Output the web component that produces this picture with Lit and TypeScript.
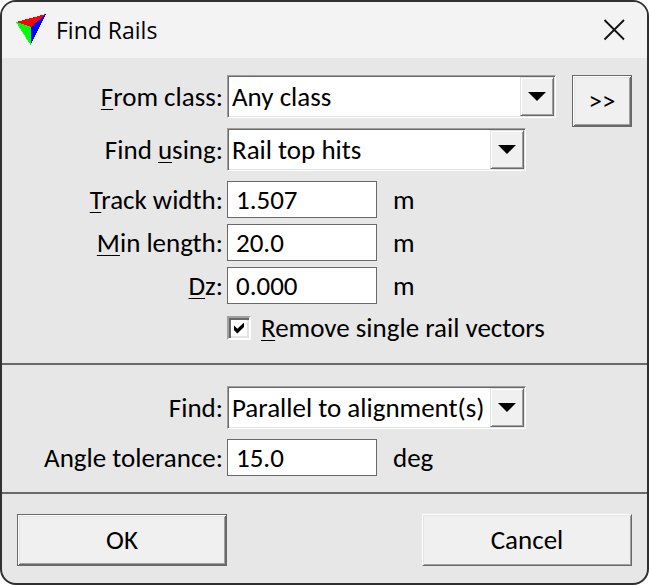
import { LitElement, html, css } from "lit";
import { customElement } from "lit/decorators.js";

const controlFont = css`
  font-family: Calibri, Carlito, Lato, "Liberation Sans", sans-serif;
  font-size: 27px;
  line-height: 34px;
  color: #000;
`;

@customElement("app-root")
class AppRoot extends LitElement {
  static styles = css`
    :host {
      display: block;
      ${controlFont}
    }
    .dialog {
      box-sizing: border-box;
      min-height: 100vh;
      border: 2px solid #303030;
      border-radius: 16px;
      background: #e7e7e7;
      overflow: hidden;
    }
    .titlebar {
      display: flex;
      align-items: center;
      height: 56px;
      padding: 0 20px 0 13px;
      background: #f3f3f3;
    }
    .logo {
      flex: none;
    }
    .title {
      flex: 1;
      margin: 0 0 0 9px;
      font: 400 23px/32px "Segoe UI", "Open Sans", "Noto Sans", sans-serif;
    }
    .close {
      display: flex;
      padding: 0;
      border: 0;
      background: none;
    }
    .section {
      display: flex;
      flex-direction: column;
      gap: 10px;
      padding: 21px 15px 16px 0;
      border-bottom: 2px solid #696969;
    }
    .main {
      padding: 17px 15px 23px 0;
    }
    .row {
      display: grid;
      grid-template-columns: 221px 1fr;
      column-gap: 4px;
      align-items: center;
    }
    .label {
      text-align: right;
      white-space: nowrap;
    }
    .field {
      display: flex;
      align-items: center;
      gap: 16px;
    }
    .inputs {
      display: flex;
      flex-direction: column;
      gap: 6px;
    }
    .key {
      text-decoration: underline;
      text-decoration-thickness: 1px;
      text-underline-offset: 3px;
    }
    .combo {
      position: relative;
      width: 299px;
    }
    .wide {
      flex: 1;
    }
    .select {
      ${controlFont}
      appearance: none;
      box-sizing: border-box;
      display: block;
      width: 100%;
      height: 43px;
      margin: 0;
      padding: 0 36px 0 4px;
      border: 1px solid;
      border-color: #a0a0a0 #fff #fff #a0a0a0;
      border-radius: 0;
      background: #fff;
      box-shadow: inset 1px 1px #696969, inset -1px -1px #e3e3e3;
      outline: none;
    }
    .drop {
      position: absolute;
      top: 2px;
      right: 2px;
      bottom: 2px;
      width: 34px;
      box-sizing: border-box;
      display: flex;
      align-items: center;
      justify-content: center;
      background: #f0f0f0;
      border: 1px solid;
      border-color: #e3e3e3 #696969 #696969 #e3e3e3;
      box-shadow: inset 1px 1px #fff, inset -1px -1px #a0a0a0;
      pointer-events: none;
    }
    .first {
      height: 43px;
      align-items: flex-start;
    }
    .first .label {
      line-height: 44px;
    }
    .text {
      ${controlFont}
      box-sizing: border-box;
      width: 150px;
      height: 37px;
      margin: 0;
      padding: 0 8px;
      border: 1px solid #696969;
      border-radius: 0;
      background: #fff;
      outline: none;
    }
    .check {
      display: flex;
      align-items: center;
      gap: 10px;
      height: 24px;
      margin-top: 2px;
      white-space: nowrap;
    }
    .box {
      appearance: none;
      flex: none;
      display: grid;
      place-items: center;
      box-sizing: border-box;
      width: 24px;
      height: 24px;
      margin: 0;
      border: 2px solid;
      border-color: #a0a0a0 #fff #fff #a0a0a0;
      background: #fff;
      box-shadow: inset 2px 2px #696969, inset -2px -2px #e3e3e3;
    }
    .box:checked::before {
      content: "";
      width: 10px;
      height: 11px;
      background: #000;
      clip-path: polygon(0 28%, 34% 56%, 100% 0, 100% 42%, 34% 100%, 0 70%);
    }
    .button {
      ${controlFont}
      box-sizing: border-box;
      height: 52px;
      padding: 0;
      border: 1px solid;
      border-color: #fff #696969 #696969 #fff;
      border-radius: 0;
      background: #f0f0f0;
      box-shadow: inset 1px 1px #e3e3e3, inset -1px -1px #a0a0a0;
    }
    .default {
      border-color: #696969;
      box-shadow: inset 1px 1px #fff, inset -1px -1px #696969,
        inset 2px 2px #e3e3e3, inset -2px -2px #a0a0a0;
    }
    .more {
      flex: none;
      width: 60px;
    }
    .footer {
      display: flex;
      justify-content: space-between;
      gap: 16px;
      padding: 20px 15px 17px;
    }
    .action {
      flex: 0 1 210px;
    }
  `;

  private key(before: string, letter: string, after: string) {
    return html`${before}<span class="key">${letter}</span>${after}`;
  }

  private input(id: string, label: unknown, value: string, unit: string) {
    return html`
      <div class="row">
        <label class="label" for=${id}>${label}</label>
        <div class="field">
          <input class="text" id=${id} type="text" .value=${value} />
          <span>${unit}</span>
        </div>
      </div>
    `;
  }

  private combo(id: string, options: string[], size = "") {
    return html`
      <div class="combo ${size}">
        <select class="select" id=${id}>
          ${options.map((option) => html`<option>${option}</option>`)}
        </select>
        <span class="drop">
          <svg width="18" height="9" viewBox="0 0 18 9"><path d="M0 0H18L9 9Z" /></svg>
        </span>
      </div>
    `;
  }

  render() {
    return html`
      <div class="dialog" role="dialog" aria-labelledby="title">
        <header class="titlebar">
          <svg class="logo" width="32" height="32" viewBox="0 0 32 32" shape-rendering="crispEdges">
            <path fill="#f00" d="M1 8L31 0L16 13Z" />
            <path fill="#0f0" d="M1 8L16 13L15.500 31Z" />
            <path fill="#00f" d="M31 0L16 13L15.500 31Z" />
          </svg>
          <h1 class="title" id="title">Find Rails</h1>
          <button class="close" aria-label="Close">
            <svg width="26" height="22" viewBox="0 0 26 22" fill="none" stroke="#111" stroke-width="1.800">
              <path d="M3.500 1L23 20.500M23 1L3.500 20.500" />
            </svg>
          </button>
        </header>
        <section class="section main">
          <div class="row first">
            <label class="label" for="class">${this.key("", "F", "rom class:")}</label>
            <div class="field first">
              ${this.combo("class", ["Any class"], "wide")}
              <button class="button default more">&gt;&gt;</button>
            </div>
          </div>
          <div class="row">
            <label class="label" for="using">${this.key("Find ", "u", "sing:")}</label>
            ${this.combo("using", ["Rail top hits"])}
          </div>
          <div class="inputs">
            ${this.input("track", this.key("", "T", "rack width:"), "1.507", "m")}
            ${this.input("min", this.key("", "M", "in length:"), "20.0", "m")}
            ${this.input("dz", this.key("", "D", "z:"), "0.000", "m")}
          </div>
          <div class="row">
            <span></span>
            <label class="check">
              <input class="box" type="checkbox" checked />
              <span>${this.key("", "R", "emove single rail vectors")}</span>
            </label>
          </div>
        </section>
        <section class="section">
          <div class="row">
            <label class="label" for="find">Find:</label>
            ${this.combo("find", ["Parallel to alignment(s)"])}
          </div>
          ${this.input("angle", "Angle tolerance:", "15.0", "deg")}
        </section>
        <footer class="footer">
          <button class="button default action">OK</button>
          <button class="button action">Cancel</button>
        </footer>
      </div>
    `;
  }
}
